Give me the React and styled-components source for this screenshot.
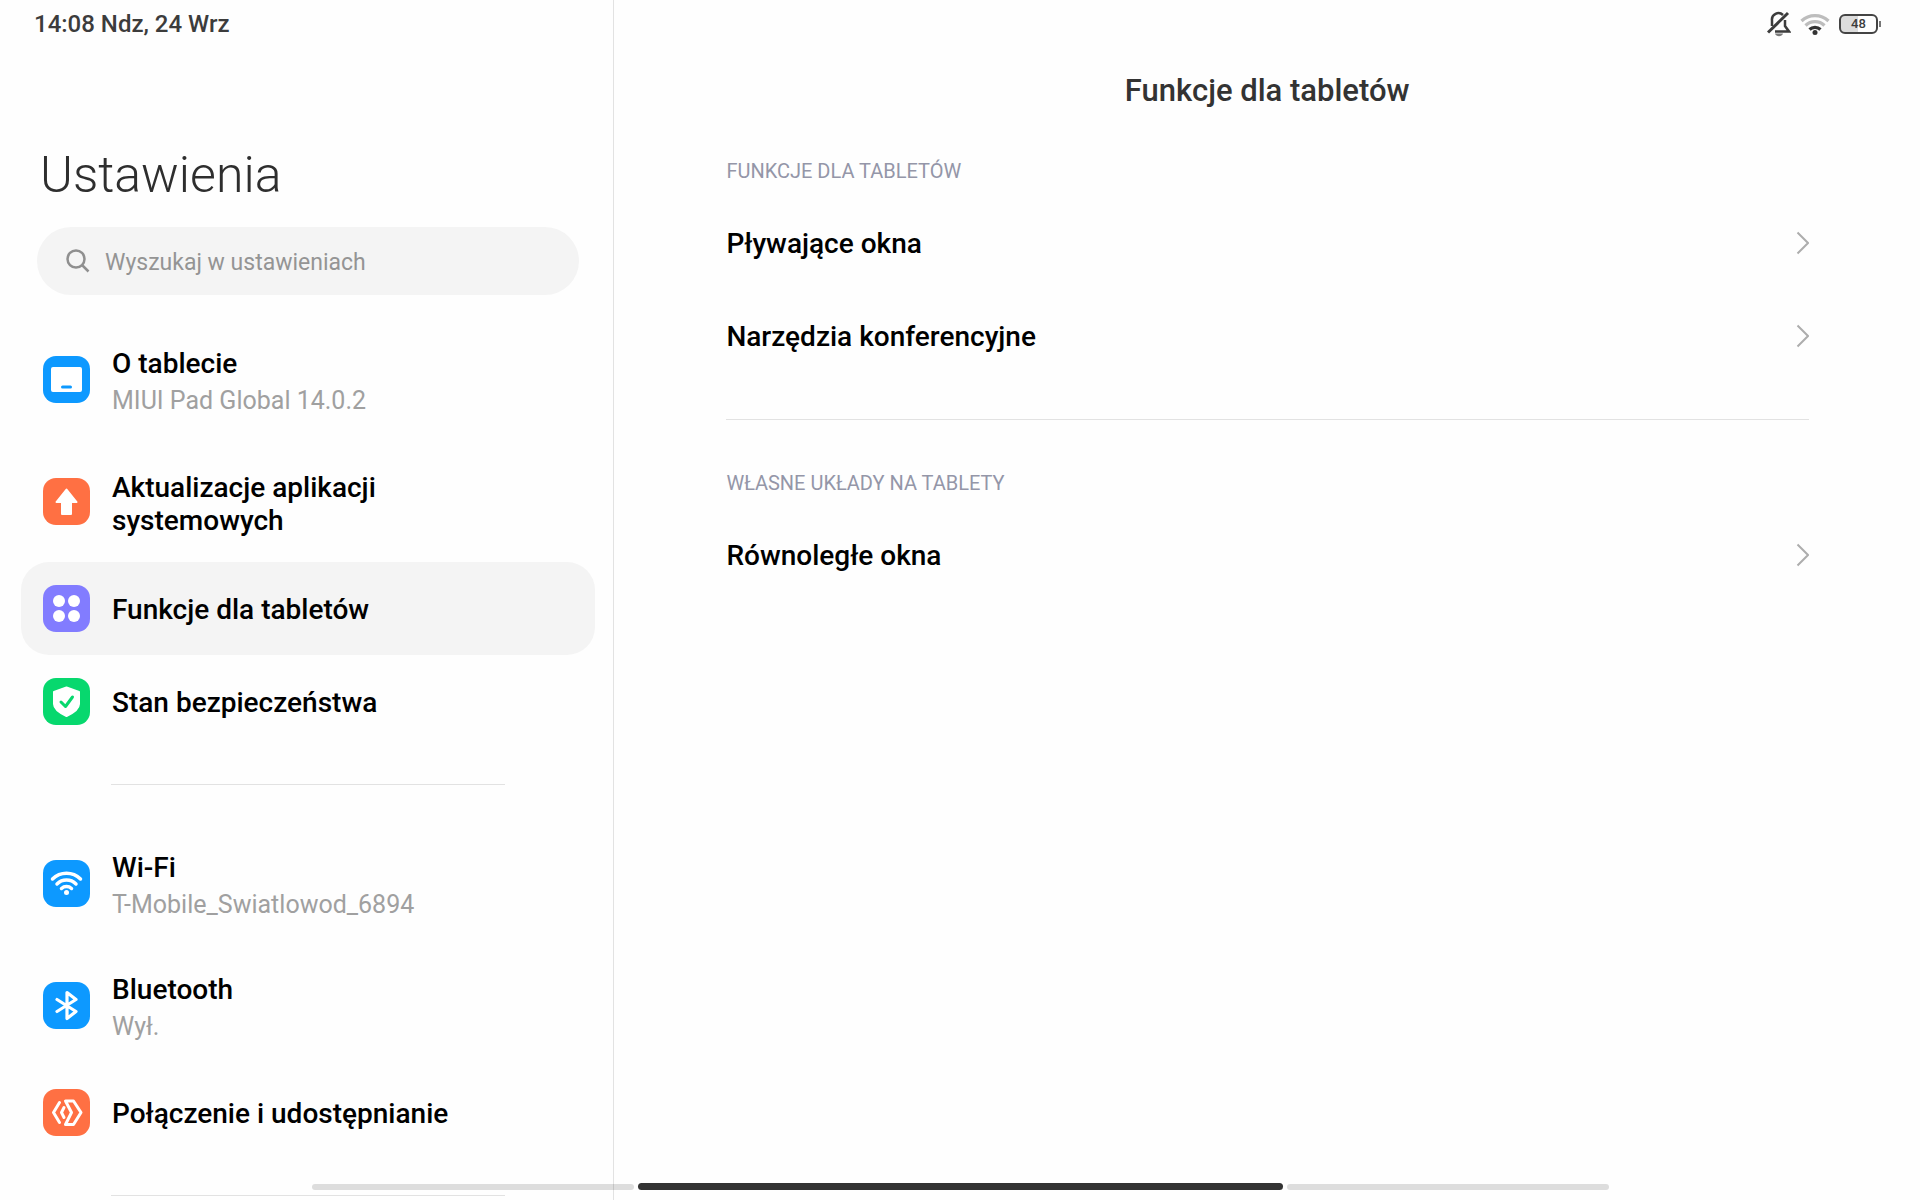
import styled, { createGlobalStyle } from "styled-components";

const GlobalStyle = createGlobalStyle`
  * {
    box-sizing: border-box;
  }
  body {
    margin: 0;
    background-color: #fefefe;
    font-family: Roboto, "Noto Sans", sans-serif;
    color: #000;
  }
  button, input {
    font-family: inherit;
    border: none;
    background: none;
    padding: 0;
  }
  h1, h2, h3 {
    margin: 0;
  }
`;

const TabletIcon = () => (
  <svg viewBox="0 0 47 47" fill="#fff" aria-hidden="true">
    <path
      fillRule="evenodd"
      d="M10 11h27a2 2 0 0 1 2 2v21a2 2 0 0 1-2 2H10a2 2 0 0 1-2-2V13a2 2 0 0 1 2-2zM19.5 29.5a1.5 1.5 0 0 0 0 3h8a1.5 1.5 0 0 0 0-3z"
    />
  </svg>
);

const UpdateIcon = () => (
  <svg viewBox="0 0 47 47" fill="#fff" stroke="#fff" strokeWidth="2" strokeLinejoin="round" aria-hidden="true">
    <path d="M23.5 11.5l10 12.5h-5.5v12h-9V24h-5.500z" />
  </svg>
);

const DotsIcon = () => (
  <svg viewBox="0 0 47 47" fill="#fff" aria-hidden="true">
    <circle cx="16" cy="16" r="6" />
    <circle cx="31" cy="16" r="6" />
    <circle cx="16" cy="31" r="6" />
    <circle cx="31" cy="31" r="6" />
  </svg>
);

const ShieldIcon = () => (
  <svg viewBox="0 0 47 47" fill="none" strokeLinecap="round" strokeLinejoin="round" aria-hidden="true">
    <path
      d="M23.5 9.500L36 14v12c0 5-6 9-12.500 12C17 35 11 31 11 26V14z"
      fill="#fff"
      stroke="#fff"
      strokeWidth="2"
    />
    <path d="M18 24l4.500 4.500 7-9.500" stroke="#07d86e" strokeWidth="3" />
  </svg>
);

const WifiIcon = () => (
  <svg viewBox="0 0 47 47" fill="none" stroke="#fff" strokeWidth="3.500" strokeLinecap="round" aria-hidden="true">
    <path d="M9.500 19a20 20 0 0 1 28 0" />
    <path d="M14 24a13.500 13.500 0 0 1 19 0" />
    <path d="M18.500 28.500a7.500 7.500 0 0 1 10 0" />
    <circle cx="23.5" cy="32.500" r="2.500" fill="#fff" stroke="none" />
  </svg>
);

const BluetoothIcon = () => (
  <svg
    viewBox="0 0 47 47"
    fill="none"
    stroke="#fff"
    strokeWidth="3.200"
    strokeLinecap="round"
    strokeLinejoin="round"
    aria-hidden="true"
  >
    <path d="M14 17.500l19 12-9 7V10.500l9 7-19 12" />
  </svg>
);

const ShareIcon = () => (
  <svg
    viewBox="0 0 47 47"
    fill="none"
    stroke="#fff"
    strokeWidth="3"
    strokeLinecap="round"
    strokeLinejoin="round"
    aria-hidden="true"
  >
    <path d="M16.500 13.500l-6 10 6 10" />
    <path d="M22.500 12h8l7.500 11.500-7.500 12h-8l6-12z" />
    <path d="M21 18.500l-2.500 5 2.500 5" />
  </svg>
);

const SearchIcon = () => (
  <svg width="24" height="24" viewBox="0 0 24 24" fill="none" stroke="#8f8f8f" strokeWidth="2.500" aria-hidden="true">
    <circle cx="10" cy="10" r="8.500" />
    <path d="M16 16l6.500 6.500" />
  </svg>
);

const ChevronIcon = () => (
  <svg width="13" height="24" viewBox="0 0 13 24" fill="none" stroke="#adadad" strokeWidth="2" aria-hidden="true">
    <path d="M1.500 1.500L12 12 1.500 22.500" />
  </svg>
);

const MutedIcon = () => (
  <svg width="24" height="26" viewBox="0 0 24 26" fill="none" stroke="#3c3c3c" strokeWidth="2.500" aria-hidden="true">
    <path d="M5 15V9.500A6.500 6.500 0 0 1 16 4M18 9v6l4 5.500H8" />
    <path d="M1 21.500L21 2" strokeWidth="3" />
    <path d="M8 22.500h8c-1 3.500-7 3.500-8 0z" fill="#7a7a7a" stroke="none" />
  </svg>
);

const SignalIcon = () => (
  <svg width="30" height="24" viewBox="0 0 30 24" fill="none" strokeWidth="3.200" aria-hidden="true">
    <path d="M1.500 9a19.500 19.500 0 0 1 27 0" stroke="#bdbdbd" />
    <path d="M5.500 13.500a13.500 13.500 0 0 1 19 0" stroke="#bdbdbd" />
    <path d="M9.500 17.500a8 8 0 0 1 11 0" stroke="#333" />
    <circle cx="15" cy="20.500" r="2.500" fill="#333" />
  </svg>
);

const Page = styled.div`
  display: grid;
  grid-template-columns: 32% 1fr;
  height: 100vh;
  overflow: hidden;
`;

const Sidebar = styled.aside`
  border-right: 1px solid #e2e2e2;
  overflow: hidden;
`;

const Content = styled.main`
  overflow: hidden;
`;

const StatusBar = styled.div`
  display: flex;
  align-items: center;
  justify-content: ${({ $end }) => ($end ? "flex-end" : "flex-start")};
  gap: 9px;
  height: 47px;
  padding: 0 39px 0 34px;
  font-size: 24px;
  font-weight: 500;
  color: #3c3c3c;
`;

const Battery = styled.div`
  display: flex;
  align-items: center;
  gap: 1px;

  & .level {
    width: 39px;
    height: 20px;
    border: 2px solid #444;
    border-radius: 6px;
    background: linear-gradient(to right, #dcdcdc 48%, #fefefe 48%);
    font-size: 13px;
    line-height: 16px;
    text-align: center;
  }
  & .tip {
    width: 2px;
    height: 6px;
    background-color: #777;
  }
`;

const Title = styled.h1`
  padding: 98px 40px 22px;
  font-size: 50px;
  line-height: 60px;
  font-weight: 300;
  color: #2e2e2e;
`;

const SearchBox = styled.label`
  display: flex;
  align-items: center;
  gap: 15px;
  height: 68px;
  margin: 0 34px 23px 37px;
  padding: 0 29px;
  border-radius: 34px;
  background-color: #f4f4f4;

  & input {
    flex: 1;
    min-width: 0;
    padding-top: 2px;
    font-size: 23px;
    outline: none;
  }
  & input::placeholder {
    color: #949494;
    opacity: 1;
  }
`;

const MenuItem = styled.button`
  display: flex;
  align-items: center;
  gap: 22px;
  width: calc(100% - 39px);
  height: ${({ $tall }) => ($tall ? "122px" : "93px")};
  margin: 0 18px 0 21px;
  padding: 0 80px 0 22px;
  border-radius: 28px;
  background-color: ${({ $active }) => ($active ? "#f4f4f4" : "transparent")};
  text-align: left;
  cursor: pointer;
`;

const IconTile = styled.span`
  flex: none;
  width: 47px;
  height: 47px;
  border-radius: 13px;
  background-color: ${({ $color }) => $color};

  & svg {
    display: block;
  }
`;

const ItemText = styled.span`
  display: flex;
  flex-direction: column;
  gap: 4px;
  padding-top: ${({ $tall }) => ($tall ? "6px" : "2px")};
  color: #000;
`;

const ItemTitle = styled.span`
  font-size: 28px;
  line-height: 33px;
  font-weight: 500;
`;

const ItemNote = styled.span`
  font-size: 25px;
  line-height: 33px;
  color: #a0a0a0;
`;

const MenuDivider = styled.hr`
  height: 1px;
  margin: 36px 108px 37px 111px;
  border: none;
  background-color: #e2e2e2;
`;

const PageTitle = styled.h2`
  padding-top: 26px;
  font-size: 31px;
  line-height: 36px;
  font-weight: 500;
  text-align: center;
  color: #333;
`;

const Section = styled.section`
  margin: 0 111px 0 112px;
  padding: ${({ $first }) => ($first ? "47px 0 37px" : "48px 0 0")};
  border-top: ${({ $first }) => ($first ? "none" : "1px solid #e2e2e2")};
`;

const SectionLabel = styled.h3`
  padding-bottom: 10px;
  font-size: 20px;
  line-height: 30px;
  font-weight: 400;
  text-transform: uppercase;
  color: #9496a8;
`;

const SectionRow = styled.button`
  display: flex;
  align-items: center;
  justify-content: space-between;
  width: 100%;
  height: 93px;
  color: #000;
  text-align: left;
  cursor: pointer;
`;

const TaskStrip = styled.div`
  position: fixed;
  left: 0;
  right: 0;
  bottom: 10px;
  display: flex;
  align-items: center;
  justify-content: center;
  gap: 4px;
`;

const TaskPill = styled.span`
  width: ${({ $current }) => ($current ? "645px" : "322px")};
  height: ${({ $current }) => ($current ? "7px" : "6px")};
  border-radius: 4px;
  background-color: ${({ $current }) => ($current ? "#333" : "rgba(0, 0, 0, 0.13)")};
`;

const deviceItems = [
  { title: "O tablecie", note: "MIUI Pad Global 14.0.2", color: "#0d99ff", icon: <TabletIcon />, tall: true },
  { title: "Aktualizacje aplikacji systemowych", color: "#ff7043", icon: <UpdateIcon />, tall: true },
  { title: "Funkcje dla tabletów", color: "#827cff", icon: <DotsIcon />, active: true },
  { title: "Stan bezpieczeństwa", color: "#07d86e", icon: <ShieldIcon /> },
];

const networkItems = [
  { title: "Wi-Fi", note: "T-Mobile_Swiatlowod_6894", color: "#0d99ff", icon: <WifiIcon />, tall: true },
  { title: "Bluetooth", note: "Wył.", color: "#0d99ff", icon: <BluetoothIcon />, tall: true },
  { title: "Połączenie i udostępnianie", color: "#ff7043", icon: <ShareIcon /> },
];

const Menu = ({ items }) => (
  <nav>
    {items.map(({ title, note, color, icon, tall, active }) => (
      <MenuItem key={title} type="button" $tall={tall} $active={active}>
        <IconTile $color={color}>{icon}</IconTile>
        <ItemText $tall={tall}>
          <ItemTitle>{title}</ItemTitle>
          {note && <ItemNote>{note}</ItemNote>}
        </ItemText>
      </MenuItem>
    ))}
  </nav>
);

const Row = ({ title }) => (
  <SectionRow type="button">
    <ItemText>
      <ItemTitle>{title}</ItemTitle>
    </ItemText>
    <ChevronIcon />
  </SectionRow>
);

export default function App() {
  return (
    <>
      <GlobalStyle />
      <Page>
        <Sidebar>
          <StatusBar>14:08 Ndz, 24 Wrz</StatusBar>
          <Title>Ustawienia</Title>
          <SearchBox>
            <SearchIcon />
            <input type="text" placeholder="Wyszukaj w ustawieniach" aria-label="Wyszukaj w ustawieniach" />
          </SearchBox>
          <Menu items={deviceItems} />
          <MenuDivider />
          <Menu items={networkItems} />
          <MenuDivider />
        </Sidebar>
        <Content>
          <StatusBar $end>
            <MutedIcon />
            <SignalIcon />
            <Battery>
              <div className="level">48</div>
              <div className="tip" />
            </Battery>
          </StatusBar>
          <PageTitle>Funkcje dla tabletów</PageTitle>
          <Section $first>
            <SectionLabel>Funkcje dla tabletów</SectionLabel>
            <Row title="Pływające okna" />
            <Row title="Narzędzia konferencyjne" />
          </Section>
          <Section>
            <SectionLabel>Własne układy na tablety</SectionLabel>
            <Row title="Równoległe okna" />
          </Section>
        </Content>
      </Page>
      <TaskStrip>
        <TaskPill />
        <TaskPill $current />
        <TaskPill />
      </TaskStrip>
    </>
  );
}
